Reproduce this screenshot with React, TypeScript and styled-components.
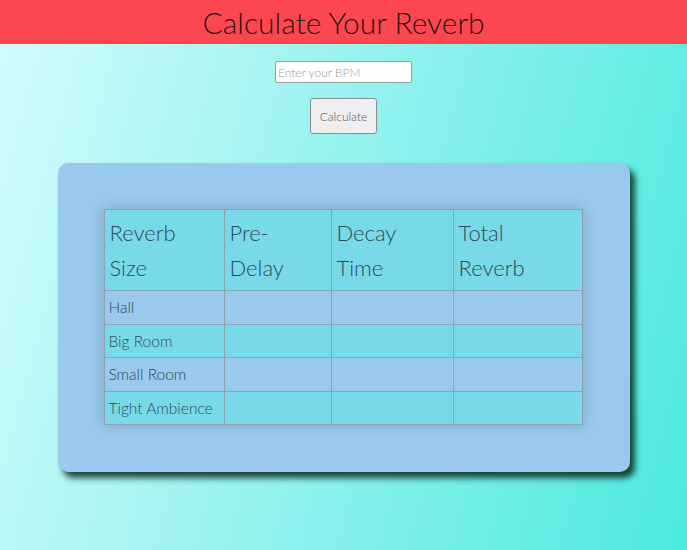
import React from "react";
import styled, { createGlobalStyle } from "styled-components";

const Global = createGlobalStyle`
  html, body { margin: 0; padding: 0; height: 100%; }
  body {
    font-family: Lato, "Open Sans", sans-serif;
    background: linear-gradient(105deg, #d2fcfc 0%, #9ef3f0 40%, #4be9e0 100%);
    background-attachment: fixed;
    min-height: 550px;
  }
  #root { min-height: 550px; }
`;

const Page = styled.div`
  display: flex;
  flex-direction: column;
  align-items: center;
  min-height: 550px;
`;

const Header = styled.header`
  align-self: stretch;
  height: 44px;
  background: #fd4750;
  display: flex;
  align-items: center;
  justify-content: center;
`;

const Title = styled.h1`
  margin: 0;
  font-family: Lato, sans-serif;
  font-weight: 300;
  font-size: 30px;
  color: #2a1416;
`;

const BpmInput = styled.input`
  margin-top: 17px;
  width: 137px;
  height: 22px;
  box-sizing: border-box;
  border: 1px solid #9a9a9a;
  border-radius: 2px;
  padding: 0 2px;
  font-family: Lato, sans-serif;
  font-size: 12px;
  font-weight: 300;
  background: #fff;
  &::placeholder { color: #9a9a9a; }
`;

const Button = styled.button`
  margin-top: 15px;
  width: 67px;
  height: 36px;
  box-sizing: border-box;
  border: 1px solid #8c8c8c;
  border-radius: 3px;
  background: #efefef;
  color: #555;
  font-family: Lato, sans-serif;
  font-size: 12px;
  font-weight: 300;
  padding: 0;
`;

const Card = styled.section`
  margin-top: 29px;
  width: 572px;
  box-sizing: border-box;
  padding: 46px 48px 47px 46px;
  background: #99c9ec;
  border-radius: 10px;
  box-shadow: 5px 6px 6px rgba(5, 40, 25, 0.85);
`;

const Table = styled.table`
  width: 478px;
  border-collapse: collapse;
  table-layout: fixed;
  box-shadow: 0 0 12px rgba(40, 60, 90, 0.25);
`;

const Row = styled.tr<{ $alt: boolean }>`
  background: ${(p) => (p.$alt ? "#78d9e9" : "#99c9ec")};
`;

const Th = styled.th`
  border: 1px solid #8fa2b2;
  text-align: left;
  vertical-align: top;
  font-family: Lato, sans-serif;
  font-weight: 300;
  font-size: 22px;
  line-height: 35px;
  color: #2e4a58;
  padding: 5px;
  height: 70px;
`;

const Td = styled.td`
  border: 1px solid #8fa2b2;
  font-family: Lato, sans-serif;
  font-size: 15.5px;
  font-weight: 300;
  color: #2e4a58;
  height: 33.5px;
  padding: 0 4px;
  box-sizing: border-box;
`;

const headers = [
  ["Reverb", "Size"],
  ["Pre-", "Delay"],
  ["Decay", "Time"],
  ["Total", "Reverb"],
];
const widths = [120, 107, 122, 129];
const rows = ["Hall", "Big Room", "Small Room", "Tight Ambience"];

export default function App() {
  return (
    <Page>
      <Global />
      <Header>
        <Title>Calculate Your Reverb</Title>
      </Header>
      <BpmInput placeholder="Enter your BPM" />
      <Button>Calculate</Button>
      <Card>
        <Table>
          <colgroup>
            {widths.map((w, i) => (
              <col key={i} style={{ width: w }} />
            ))}
          </colgroup>
          <thead>
            <Row $alt>
              {headers.map(([a, b]) => (
                <Th key={a + b}>
                  {a}
                  <br />
                  {b}
                </Th>
              ))}
            </Row>
          </thead>
          <tbody>
            {rows.map((r, i) => (
              <Row key={r} $alt={i % 2 === 1}>
                <Td>{r}</Td>
                <Td />
                <Td />
                <Td />
              </Row>
            ))}
          </tbody>
        </Table>
      </Card>
    </Page>
  );
}
